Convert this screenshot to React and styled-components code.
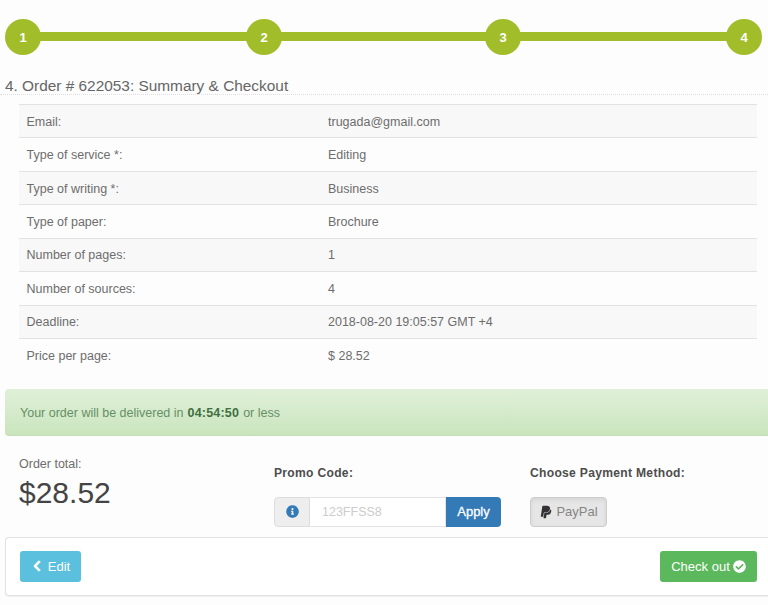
import React from "react";
import styled, { createGlobalStyle } from "styled-components";
import { FaChevronLeft, FaCheckCircle, FaInfoCircle, FaPaypal } from "react-icons/fa";

const GlobalStyle = createGlobalStyle`
  html, body {
    margin: 0;
    padding: 0;
    background: #fdfdfd;
    font-family: "Liberation Sans", Arial, sans-serif;
    color: #555;
  }
  * { box-sizing: border-box; }
`;

const Page = styled.div`
  width: 768px;
  height: 605px;
  overflow: hidden;
  padding-top: 19px;
`;

const Stepper = styled.div`
  display: flex;
  align-items: center;
  padding: 0 6px 0 5px;
`;

const Circle = styled.div`
  width: 36px;
  height: 36px;
  flex: none;
  border-radius: 50%;
  background: #a2bd2a;
  color: #fff;
  font-size: 13px;
  font-weight: 700;
  display: flex;
  align-items: center;
  justify-content: center;
`;

const Line = styled.div`
  width: ${props => props.$width}px;
  height: 9px;
  margin: 0 -1px 1px;
  background: #a2bd2a;
`;

const Title = styled.h2`
  margin: 21px 0 0;
  padding: 0 0 1px 5px;
  height: 19px;
  font-size: 15.4px;
  line-height: 19px;
  font-weight: 400;
  color: #666;
  border-bottom: 1px dotted #ddd;
`;

const Table = styled.div`
  margin: 9px 11px 0 19px;
`;

const Row = styled.div`
  display: flex;
  align-items: center;
  height: 33.45px;
  padding: 1px 0 0 7.5px;
  font-size: 12.5px;
  color: #6d6d6d;
  border-top: 1px solid #e2e2e2;
  background: ${props => (props.$odd ? "#f8f8f8" : "transparent")};
`;

const Label = styled.div`
  width: 301.5px;
`;

const Notice = styled.div`
  margin: 17px 0 0 5px;
  height: 47px;
  display: flex;
  align-items: center;
  padding: 2px 0 0 15px;
  font-size: 12.5px;
  color: #678f67;
  background: linear-gradient(#e0f0d9, #c9e5bd);
  border-radius: 4px 0 0 4px;
  border-bottom: 1px solid #c4dfb8;
  strong {
    color: #40703f;
    margin: 0 4px;
    letter-spacing: 0.2px;
  }
`;

const Summary = styled.div`
  display: flex;
  height: 101px;
  padding-left: 19px;
`;

const TotalBlock = styled.div`
  width: 255px;
  padding-top: 20px;
`;

const TotalLabel = styled.div`
  font-size: 12.5px;
  line-height: 16px;
  color: #6d6d6d;
`;

const TotalValue = styled.div`
  margin-top: 4px;
  font-size: 30px;
  line-height: 34px;
  color: #444;
`;

const Field = styled.div`
  width: ${props => props.$width}px;
  padding-top: 29px;
`;

const FieldLabel = styled.div`
  font-size: 12.1px;
  line-height: 16px;
  font-weight: 700;
  letter-spacing: 0.3px;
  color: #4d4d4d;
  margin-bottom: 16px;
`;

const PromoGroup = styled.div`
  display: flex;
  width: 227px;
  height: 30px;
`;

const Addon = styled.div`
  width: 36px;
  display: flex;
  align-items: center;
  justify-content: center;
  background: #eee;
  color: #337ab7;
  font-size: 13px;
  border: 1px solid #ddd;
  border-radius: 4px 0 0 4px;
`;

const PromoInput = styled.input`
  width: 136px;
  border: 1px solid #e2e2e2;
  border-left: none;
  background: #fff;
  padding: 0 12px;
  font-family: inherit;
  font-size: 12.5px;
  outline: none;
  &::placeholder {
    color: #ccc;
    opacity: 1;
  }
`;

const ApplyButton = styled.button`
  flex: 1;
  border: none;
  padding: 0;
  background: #337ab7;
  color: #fff;
  font-family: inherit;
  font-size: 13px;
  -webkit-text-stroke: 0.3px #fff;
  border-radius: 0 4px 4px 0;
`;

const PayPalButton = styled.button`
  width: 77px;
  height: 30px;
  display: flex;
  align-items: center;
  justify-content: center;
  gap: 3px;
  padding: 0;
  border: 1px solid #ccc;
  border-radius: 4px;
  background: #e6e6e6;
  box-shadow: inset 0 2px 4px rgba(0, 0, 0, 0.08);
  color: #858585;
  font-family: inherit;
  font-size: 13px;
  svg {
    color: #333;
    font-size: 14px;
  }
`;

const ActionBar = styled.div`
  margin-left: 5px;
  height: 59px;
  display: flex;
  align-items: center;
  justify-content: space-between;
  padding: 0 11px 0 14px;
  background: #fff;
  border: 1px solid #e2e2e2;
  border-right: none;
  border-radius: 4px 0 0 4px;
  box-shadow: 0 1px 1px rgba(0, 0, 0, 0.05);
`;

const ActionButton = styled.button`
  height: 31px;
  width: ${props => props.$width}px;
  display: flex;
  align-items: center;
  justify-content: center;
  gap: ${props => props.$gap}px;
  padding: 0;
  border: none;
  border-radius: 3px;
  background: ${props => props.$color};
  color: #fff;
  font-family: inherit;
  font-size: 13px;
`;

const details = [
  ["Email:", "trugada@gmail.com"],
  ["Type of service *:", "Editing"],
  ["Type of writing *:", "Business"],
  ["Type of paper:", "Brochure"],
  ["Number of pages:", "1"],
  ["Number of sources:", "4"],
  ["Deadline:", "2018-08-20 19:05:57 GMT +4"],
  ["Price per page:", "$ 28.52"],
];

export default function App() {
  return (
    <Page>
      <GlobalStyle />
      <Stepper>
        <Circle>1</Circle>
        <Line $width={207} />
        <Circle>2</Circle>
        <Line $width={205} />
        <Circle>3</Circle>
        <Line $width={207} />
        <Circle>4</Circle>
      </Stepper>
      <Title>4. Order # 622053: Summary &amp; Checkout</Title>
      <Table>
        {details.map(([label, value], i) => (
          <Row key={label} $odd={i % 2 === 0}>
            <Label>{label}</Label>
            <div>{value}</div>
          </Row>
        ))}
      </Table>
      <Notice>
        Your order will be delivered in <strong>04:54:50</strong> or less
      </Notice>
      <Summary>
        <TotalBlock>
          <TotalLabel>Order total:</TotalLabel>
          <TotalValue>$28.52</TotalValue>
        </TotalBlock>
        <Field $width={256}>
          <FieldLabel>Promo Code:</FieldLabel>
          <PromoGroup>
            <Addon>
              <FaInfoCircle />
            </Addon>
            <PromoInput placeholder="123FFSS8" />
            <ApplyButton>Apply</ApplyButton>
          </PromoGroup>
        </Field>
        <Field $width={200}>
          <FieldLabel>Choose Payment Method:</FieldLabel>
          <PayPalButton>
            <FaPaypal />
            PayPal
          </PayPalButton>
        </Field>
      </Summary>
      <ActionBar>
        <ActionButton $width={61} $gap={5} $color="#5bc0de">
          <FaChevronLeft size={12} stroke="currentColor" strokeWidth={40} />
          Edit
        </ActionButton>
        <ActionButton $width={97} $gap={3} $color="#5cb85c">
          Check out
          <FaCheckCircle size={13} />
        </ActionButton>
      </ActionBar>
    </Page>
  );
}
